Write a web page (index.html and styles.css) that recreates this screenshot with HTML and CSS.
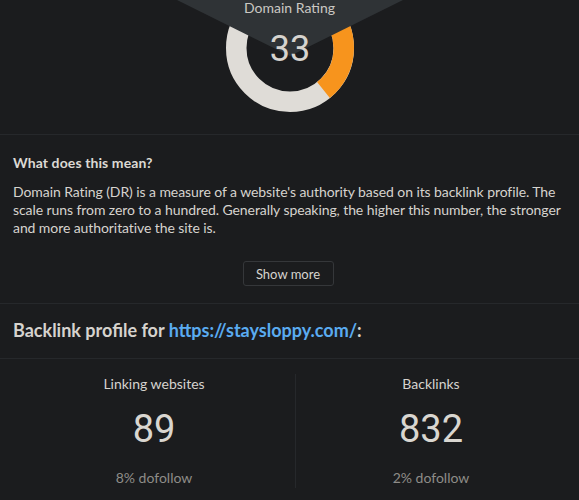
FILE: index.html
```html
<!DOCTYPE html>
<html>
<head>
<meta charset="utf-8">
<link rel="stylesheet" href="styles.css">
</head>
<body>
<div class="page">
  <section class="gauge-section">
    <div class="gauge">
      <svg class="ring" width="128" height="128" viewBox="0 0 128 128">
        <circle cx="64" cy="64" r="53.75" fill="none" stroke="#dfdcd7" stroke-width="20.5"/>
        <circle cx="64" cy="64" r="53.75" fill="none" stroke="#f7941d" stroke-width="20.5"
          stroke-dasharray="132.5 400" transform="rotate(-90 64 64)"/>
      </svg>
    </div>
    <svg class="pointer" width="579" height="60" viewBox="0 0 579 60">
      <polygon points="177,0 403,0 290,56" fill="#2f3336"/>
    </svg>
    <div class="pointer-label">Domain Rating</div>
    <div class="dr-value">33</div>
  </section>

  <section class="explain">
    <h2 class="explain-title">What does this mean?</h2>
    <p class="explain-text">Domain Rating (DR) is a measure of a website's authority based on its backlink profile. The scale runs from zero to a hundred. Generally speaking, the higher this number, the stronger and more authoritative the site is.</p>
    <div class="more-row"><button class="more-btn">Show more</button></div>
  </section>

  <section class="profile">
    <h2 class="profile-title">Backlink profile for <a class="profile-link">https://staysloppy.com/</a>:</h2>
  </section>

  <section class="stats">
    <div class="stat stat-first">
      <div class="stat-label">Linking websites</div>
      <div class="stat-value">89</div>
      <div class="stat-sub">8% dofollow</div>
    </div>
    <div class="stat-sep"></div>
    <div class="stat stat-second">
      <div class="stat-label">Backlinks</div>
      <div class="stat-value">832</div>
      <div class="stat-sub">2% dofollow</div>
    </div>
  </section>
</div>
</body>
</html>
```

FILE: styles.css
```css
html, body {
  margin: 0;
  padding: 0;
  background: #1b1c1e;
}
body {
  font-family: Lato, "Open Sans", sans-serif;
  color: #dcd9d4;
  width: 579px;
  height: 500px;
  overflow: hidden;
}
.gauge-section {
  position: relative;
  height: 135px;
  border-bottom: 1px solid #26282b;
  box-sizing: border-box;
  display: flex;
  justify-content: center;
  overflow: hidden;
}
.gauge {
  width: 128px;
  height: 128px;
  margin-top: -16px;
  margin-left: 1px;
}
.ring {
  display: block;
}
.pointer {
  position: absolute;
  left: 0;
  top: 0;
}
.pointer-label {
  position: absolute;
  left: 0;
  right: 0;
  top: 0;
  text-align: center;
  font-size: 14px;
  line-height: 16px;
  color: #cbc8c3;
}
.dr-value {
  position: absolute;
  left: 0;
  right: 0;
  top: 28px;
  text-align: center;
  font-family: Roboto, sans-serif;
  font-size: 36px;
  font-weight: 400;
  line-height: 42px;
  color: #d6d3ce;
  padding-left: 1px;
}
.explain {
  padding: 18px 6px 17px 13px;
  border-bottom: 1px solid #26282b;
}
.explain-title {
  margin: 0;
  font-size: 14px;
  font-weight: 700;
  line-height: 20px;
  letter-spacing: 0.1px;
  color: #dcd9d4;
}
.explain-text {
  margin: 10px 0 0 0;
  font-size: 14px;
  line-height: 18px;
  letter-spacing: -0.08px;
  color: #d6d3ce;
}
.more-row {
  display: flex;
  justify-content: center;
  margin-top: 24px;
  padding-right: 11px;
}
.more-btn {
  font-family: Lato, sans-serif;
  font-size: 13px;
  color: #d6d3ce;
  background: #1b1c1e;
  border: 1px solid #35373a;
  border-radius: 3px;
  width: 91px;
  height: 25px;
  padding: 0;
  margin-left: 1px;
}
.profile {
  padding: 14px 13px 16px 13px;
  border-bottom: 1px solid #26282b;
}
.profile-title {
  margin: 0;
  font-size: 18px;
  font-weight: 700;
  line-height: 24px;
  color: #d6d3ce;
}
.profile-link {
  color: #5aabf0;
}
.stats {
  display: flex;
  padding: 15px 13px 0 13px;
}
.stat {
  text-align: center;
}
.stat-first {
  width: 282px;
}
.stat-second {
  flex: 1;
}
.stat-sep {
  width: 1px;
  height: 114px;
  background: #26282b;
}
.stat-label {
  font-size: 14px;
  line-height: 20px;
  color: #d6d3ce;
}
.stat-value {
  font-family: Roboto, sans-serif;
  font-size: 38px;
  line-height: 44px;
  margin-top: 13px;
  color: #d9d6d0;
}
.stat-sub {
  font-size: 14px;
  line-height: 20px;
  margin-top: 17px;
  color: #8e8c88;
}
```
